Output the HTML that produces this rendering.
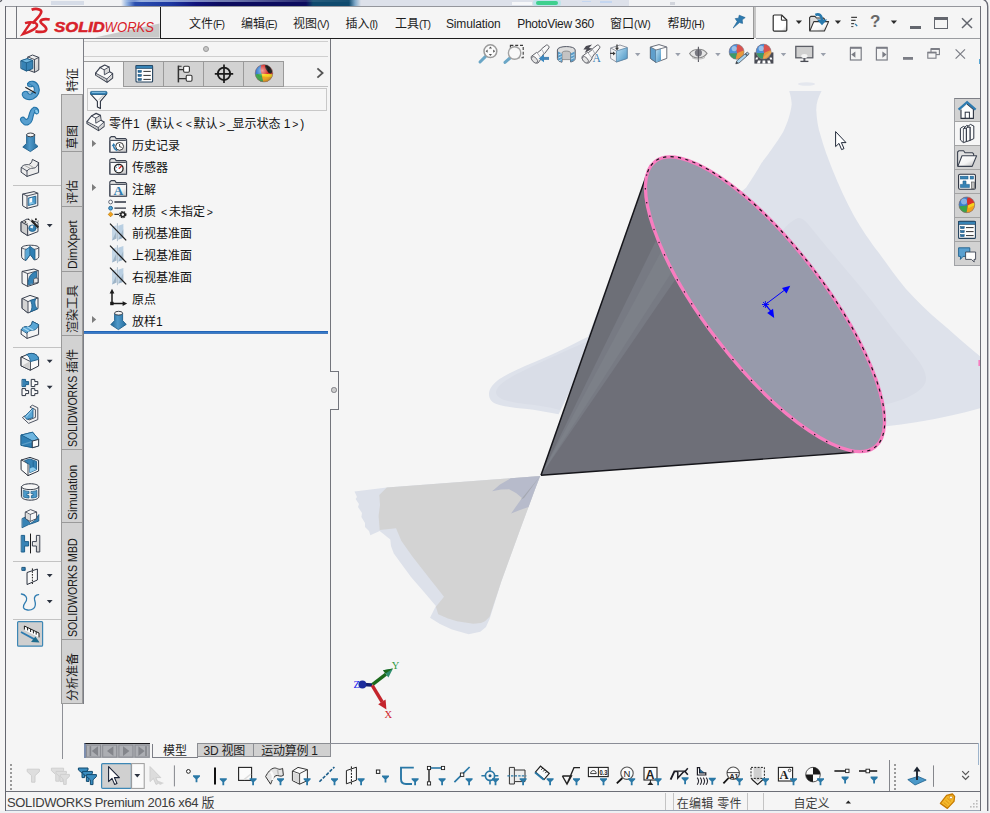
<!DOCTYPE html>
<html lang="zh-CN">
<head>
<meta charset="utf-8">
<title>SOLIDWORKS Premium 2016 x64 版</title>
<style>
html,body{margin:0;padding:0;}
body{width:990px;height:813px;position:relative;overflow:hidden;background:#f5f5f5;
  font-family:"Liberation Sans","Noto Sans CJK SC",sans-serif;font-size:12px;color:#1e1e1e;}
.abs{position:absolute;}
.ln{position:absolute;background:#74767d;}
.t{position:absolute;white-space:nowrap;line-height:16px;}
svg{position:absolute;overflow:visible;}
/* vertical tabs */
.vtab{position:absolute;left:61px;width:22px;background:#d2d2d2;border:1px solid #9a9a9a;box-sizing:border-box;}
.vtab>span,.vt{position:absolute;left:18px;bottom:2.5px;white-space:nowrap;transform-origin:0 100%;transform:rotate(-90deg);font-size:12px;line-height:14px;height:14px;color:#1a1a1a;}
.ftab{top:61px;width:41px;height:26px;background:#d2d2d2;border:1px solid #9a9a9a;box-sizing:border-box;}
.sx{display:inline-block;transform-origin:0 50%;}
.menu{position:absolute;top:15.6px;font-size:12px;line-height:16px;white-space:nowrap;color:#1e1e1e;}
.mn{font-size:10.5px;letter-spacing:-0.7px;}
.ab{display:inline-block;width:9.6px;text-align:center;font-size:10.5px;}
.tree{position:absolute;font-size:12px;line-height:16px;white-space:nowrap;color:#111;}
.btab{position:absolute;top:743.5px;height:15px;font-size:12px;line-height:15px;white-space:nowrap;}
</style>
</head>
<body>
<!-- ===== desktop strip behind the window ===== -->
<div class="abs" id="deskstrip" style="left:0;top:0;width:990px;height:6px;background:#f1f2f4;">
<div class="abs" style="left:51px;top:1px;width:33px;height:3.5px;background:#d6dce7;"></div>
<div class="abs" style="left:121px;top:0;width:240px;height:6px;background:linear-gradient(to right,rgba(241,242,244,1) 0,#8fb0e0 6px,#2b4faf 14px,#1d37a0 50px,#10127a 75px,#0c0c5e 100px,#0c0c5e 185px,#0f4a6e 192px,#0f4a6e 228px,#7fa8c8 234px,#dde1ea 240px);"></div>
<div class="abs" style="left:121px;top:0;width:240px;height:1.5px;background:linear-gradient(to right,rgba(255,255,255,0) 0,rgba(190,210,240,0.75) 20px,rgba(190,210,240,0.55) 110px,rgba(255,255,255,0.1) 190px,rgba(255,255,255,0) 240px);"></div>
<div class="abs" style="left:361px;top:0;width:268px;height:5.5px;background:#dde1ea;"></div>
<div class="abs" style="left:512px;top:1.5px;width:20px;height:3px;background:#f6f7f9;"></div>
<div class="abs" style="left:533px;top:0;width:28px;height:5.5px;background:#bfe3ea;border-radius:2px;"></div>
<div class="abs" style="left:536px;top:0.5px;width:22px;height:4.5px;background:#3ed08e;border-radius:2px;"></div>
<div class="abs" style="left:582px;top:0.5px;width:9px;height:1.5px;background:#c4d6f0;"></div>
<div class="abs" style="left:600px;top:0.5px;width:12px;height:2px;background:#c4d6f0;"></div>
<div class="abs" style="left:670px;top:2px;width:5px;height:2.5px;background:#d2d5dc;"></div>
</div>

<!-- ===== window frame ===== -->
<div class="ln" style="left:5px;top:6px;width:976px;height:1px;background:#94969c;"></div>
<div class="ln" style="left:5px;top:6px;width:1.3px;height:805px;background:#65676f;"></div>
<div class="ln" style="left:16px;top:6px;width:1px;height:32px;"></div>
<div class="ln" style="left:5px;top:38px;width:156px;height:1px;"></div>

<!-- SECTION: titlebar -->
<!-- logo -->
<svg style="left:0;top:0" width="165" height="40" viewBox="0 0 165 40">
  <polygon points="95,37.5 159.5,23.5 159.5,37.5" fill="#c9c9c9"/>
  <g fill="none" stroke="#d8222a" stroke-linecap="butt" stroke-linejoin="miter">
    <path d="M31.6,9.800 C35,8.400 40.800,8.600 41.300,11.600 C41.500,14.400 37,18.600 32.400,23.400" stroke-width="2.700"/>
    <path d="M25,23.200 C30,21.600 36.600,22 37.100,25 C37.400,28 31,31.400 22.800,34.200 L30.800,22.400" stroke-width="2.400"/>
    <path d="M49.700,19.500 C45,18.500 40.700,19.300 40.500,21.700 C40.500,23.900 46.700,26.300 46.300,29.300 C45.600,32.100 40,32.100 35.400,31.300" stroke-width="2.700"/>
  </g>
  <text x="54.3" y="31.5" font-family="Liberation Sans, sans-serif" font-size="14.6" font-weight="700" font-style="italic" fill="#d8222a" stroke="#d8222a" stroke-width="0.5" textLength="50.5" lengthAdjust="spacingAndGlyphs">SOLID</text>
  <text x="104.6" y="31.5" font-family="Liberation Sans, sans-serif" font-size="14.6" font-style="italic" fill="#d8222a" textLength="49.5" lengthAdjust="spacingAndGlyphs">WORKS</text>
</svg>
<!-- menu bar borders -->
<div class="abs" style="left:160px;top:7px;width:1px;height:32px;background:#1c1c1c;"></div>
<div class="abs" style="left:160px;top:37.5px;width:594px;height:1.5px;background:#1c1c1c;"></div>
<div class="abs" style="left:753px;top:7px;width:3px;height:31px;background:#c6c6c6;border-left:1px solid #9b9b9b;box-sizing:border-box;"></div>
<div class="ln" style="left:756px;top:38px;width:224px;height:1px;background:#9a9ca0;"></div>
<div class="menu" style="left:189px;">文件<span class="mn">(F)</span></div>
<div class="menu" style="left:241px;">编辑<span class="mn">(E)</span></div>
<div class="menu" style="left:293px;">视图<span class="mn">(V)</span></div>
<div class="menu" style="left:345.5px;">插入<span class="mn">(I)</span></div>
<div class="menu" style="left:395px;">工具<span class="mn">(T)</span></div>
<div class="menu" id="m_sim" style="letter-spacing:-0.15px;left:446px;">Simulation</div>
<div class="menu" id="m_pv" style="letter-spacing:-0.3px;left:517.300px;">PhotoView 360</div>
<div class="menu" style="left:610px;">窗口<span class="mn" style="letter-spacing:-0.1px">(W)</span></div>
<div class="menu" style="left:667.5px;">帮助<span class="mn">(H)</span></div>
<!-- pin -->
<svg style="left:730px;top:13px" width="18" height="18" viewBox="0 0 18 18">
  <path d="M9.2,2.2 L15.2,4.6 L12.2,6.8 L12.6,10.4 L9.4,9.6 L3.2,15 L7.2,8.6 L5.2,5.6 L8.6,5.2 Z" fill="#2e7bb0" stroke="#1d5f90" stroke-width="0.6"/>
</svg>
<!-- new document -->
<svg style="left:770px;top:12px" width="22" height="22" viewBox="0 0 22 22">
  <defs><linearGradient id="gnd" x1="0.4" y1="0.4" x2="1" y2="1"><stop offset="0" stop-color="#ffffff"/><stop offset="0.6" stop-color="#ffffff"/><stop offset="1" stop-color="#b9b9b9"/></linearGradient></defs>
  <path d="M4.400,3 H11.600 L16.800,8 V18 Q16.800,19.200 15.600,19.200 H4.400 Q3.200,19.200 3.200,18 V4.200 Q3.200,3 4.400,3 Z" fill="url(#gnd)" stroke="#2b2b2b" stroke-width="1.200" stroke-linejoin="round"/>
  <path d="M11.400,3.400 V8.200 H16.600" fill="none" stroke="#2b2b2b" stroke-width="1"/>
</svg>
<svg style="left:795px;top:20px" width="8" height="5" viewBox="0 0 8 5"><polygon points="0.8,0.6 7,0.6 3.9,3.9" fill="#2b2b2b"/></svg>
<!-- open -->
<svg style="left:806px;top:11px" width="26" height="24" viewBox="806 11 26 24">
  <defs><linearGradient id="gop" x1="0.300" y1="0.200" x2="1" y2="1"><stop offset="0" stop-color="#ffffff"/><stop offset="0.550" stop-color="#f4f4f4"/><stop offset="1" stop-color="#b4b4b4"/></linearGradient></defs>
  <path d="M809.600,30.800 V17.600 L810.800,16.400 H815 L816.400,18 H823.400 L824.400,19 V22" fill="#dcdcdc" stroke="#333" stroke-width="1.100" stroke-linejoin="round"/>
  <path d="M809.800,31 L813.800,21.600 H828.600 L824.400,31 Z" fill="url(#gop)" stroke="#333" stroke-width="1.100" stroke-linejoin="round"/>
  <path d="M815.400,15 C819,13.400 822,15.400 822,20" fill="none" stroke="#2779ad" stroke-width="2.600"/>
  <polygon points="816.800,19.600 827.200,19.600 822,25.200" fill="#2779ad"/>
</svg>
<svg style="left:834px;top:20px" width="8" height="5" viewBox="0 0 8 5"><polygon points="0.8,0.6 7,0.6 3.9,3.9" fill="#2b2b2b"/></svg>
<!-- options small -->
<svg style="left:849px;top:15px" width="10" height="14" viewBox="0 0 10 14">
  <path d="M2.2,2.4 H8 M2.2,5.4 H6.6 M2.2,8.6 H5.2" stroke="#444" stroke-width="1.1" fill="none"/>
  <path d="M6.2,8.8 L8.2,11.2" stroke="#2779ad" stroke-width="1.3"/>
  <path d="M2.2,11.6 H4.4" stroke="#444" stroke-width="1"/>
</svg>
<!-- help -->
<div class="t" style="left:870px;top:12px;font-size:17px;line-height:20px;font-weight:700;color:#686868;font-family:'Liberation Sans',sans-serif;">?</div>
<svg style="left:890px;top:20px" width="8" height="5" viewBox="0 0 8 5"><polygon points="0.8,0.6 7,0.6 3.9,3.9" fill="#2b2b2b"/></svg>
<!-- window buttons -->
<div class="abs" style="left:909.5px;top:25.5px;width:11px;height:3px;background:#63666e;"></div>
<div class="abs" style="left:934px;top:17px;width:14px;height:12px;border:1.3px solid #63666e;border-top-width:3px;box-sizing:border-box;"></div>
<svg style="left:960px;top:16px" width="14" height="14" viewBox="0 0 14 14"><path d="M2,2.200 L12,12 M12,2.200 L2,12" stroke="#63666e" stroke-width="1.500" fill="none"/></svg>

<!-- SECTION: lefttoolbar -->
<svg style="left:0;top:0" width="62" height="660" viewBox="0 0 62 660">
<defs>
  <linearGradient id="bl" x1="0" y1="0" x2="1" y2="1"><stop offset="0" stop-color="#8fcbea"/><stop offset="1" stop-color="#2b7db3"/></linearGradient>
  <linearGradient id="blh" x1="0" y1="0" x2="1" y2="0"><stop offset="0" stop-color="#1f6593"/><stop offset="0.45" stop-color="#4f99c9"/><stop offset="1" stop-color="#246c9d"/></linearGradient>
  <linearGradient id="wg" x1="0" y1="0" x2="1" y2="1"><stop offset="0" stop-color="#ffffff"/><stop offset="1" stop-color="#c9c9c9"/></linearGradient>
</defs>
<g stroke-linejoin="round" stroke-linecap="round">
<!-- separators -->
<g stroke="#c3c3c3" stroke-width="1" stroke-linecap="butt">
  <path d="M13,185.5 H61 M13,347.5 H61 M13,561.5 H61 M13,619.5 H61"/>
</g>
<!-- 1 extrude boss -->
<path d="M28,57 L32.5,55 L38.8,57.4 L38.8,70 L34.5,72.4 L28,70 Z" fill="url(#wg)" stroke="#3b4250" stroke-width="1"/>
<path d="M34.5,59.6 L34.5,72.2 M28,57 L34.5,59.6 L38.8,57.4" fill="none" stroke="#3b4250" stroke-width="0.9"/>
<path d="M21.2,60.8 L27.4,58.8 L32.8,60.6 L32.8,68.6 L26.4,71 L21.2,68.6 Z" fill="#3783b5" stroke="#1b5a85" stroke-width="1"/>
<path d="M21.2,60.8 L26.4,62.8 L32.8,60.6 L27.4,58.8 Z" fill="#72b8e0" stroke="#1b5a85" stroke-width="0.8"/>
<path d="M26.4,62.8 L26.4,71" stroke="#1b5a85" stroke-width="0.8"/>
<!-- 2 revolve -->
<path d="M27.5,83.5 C30,80 36,80.5 38.5,86 C40.5,91 38.5,96.5 33,99 C28,100.8 23,98.5 22.2,95 C21.8,92 25.5,90.4 27.6,92 C27.8,94.4 30.5,95 32.6,93 C35,91 35,87 32.5,86 C30.5,87.5 27,86.5 27.5,83.5 Z" fill="#589fcf" stroke="#2273a8" stroke-width="1.1"/>
<path d="M27.6,92 C29.5,91.5 31,92 32.6,93 M32.5,86 C31.5,84.5 29.5,83.6 27.5,83.5" fill="none" stroke="#2273a8" stroke-width="0.8"/>
<path d="M25.8,87.4 L35.4,93" stroke="#222" stroke-width="1.2"/>
<!-- 3 sweep -->
<path d="M20.4,119.5 C20.6,117 23.4,116.4 24.6,118 C26,120.4 28,119.4 28.6,116.6 C29.6,112 30.6,108.6 33.6,107.4 C36.6,106.8 39.2,109.4 38.6,112 C38,114.6 35.2,114.2 34.6,112.4 C33.2,113.6 33.4,117 32,120.6 C30.4,124.6 27,126 24,124.4 C22,123.2 20.6,121.4 20.4,119.5 Z" fill="#589fcf" stroke="#2273a8" stroke-width="1.1"/>
<ellipse cx="36.6" cy="111.4" rx="1.9" ry="2.5" fill="#8ccbec" stroke="#2273a8" stroke-width="0.8" transform="rotate(-20 36.6 111.4)"/>
<!-- 4 loft -->
<path d="M26.6,135 L26.6,143.4 L22.8,147 L30.4,151.6 L38,146.4 L34.6,143.4 L34.6,135 Z" fill="url(#blh)" stroke="#1d5f8c" stroke-width="0.9"/>
<ellipse cx="30.6" cy="134.9" rx="4" ry="1.9" fill="#f6f6f6" stroke="#2a2f38" stroke-width="0.9"/>
<!-- 5 boundary boss -->
<path d="M21.4,167.4 C23,164.6 26,164.4 28.4,164.6 C30.6,164.4 32,162 32.4,159.4 L38.6,162.6 L38.6,172.6 L27,176.4 L21.4,172.4 Z" fill="#ececec" stroke="#3b4250" stroke-width="1"/>
<path d="M21.4,167.4 L27,171 L27,176.4 M27,171 C28.6,168.6 31,168.2 33.4,168.2 C36,168 37.8,165.6 38.6,162.6" fill="none" stroke="#3b4250" stroke-width="0.9"/>
<path d="M25,165.6 L30.6,168.6 M28.6,164.6 L34.4,168" fill="none" stroke="#9a9a9a" stroke-width="0.8"/>
<!-- 6 extruded cut -->
<path d="M23,194 L34,191.6 L37.8,193.2 L37.8,205.6 L27,208.4 L23,206 Z" fill="#f4f4f4" stroke="#3b4250" stroke-width="1"/>
<path d="M23,194 L27,196 L37.8,193.2 M27,196 L27,208.4" fill="none" stroke="#3b4250" stroke-width="0.9"/>
<path d="M28.6,198 L35.8,196.2 L35.8,203.6 L28.6,205.4 Z" fill="#4b9acb" stroke="#1d5f8c" stroke-width="0.9"/>
<path d="M29.4,198.6 L32.2,197.8 L32.2,202.2 L29.4,203 Z" fill="#fafafa"/>
<path d="M29.4,203 L32.2,202.2 L35,203.2 L29.4,204.8 Z" fill="#8ccbec"/>
<!-- 7 hole wizard -->
<path d="M21.4,222 L27,219 L38,222.6 L38,231.6 L27.6,235.6 L21.4,231.6 Z" fill="#f2f2f2" stroke="#3b4250" stroke-width="1"/>
<path d="M21.4,222 L27.6,225.4 L27.6,235.6" fill="#d0d0d0" stroke="#3b4250" stroke-width="0.9"/>
<path d="M21.4,222 L27.6,225.4 L27.6,235.6 L21.4,231.6 Z" fill="#cfcfcf" stroke="#3b4250" stroke-width="0.9"/>
<ellipse cx="32.4" cy="228.2" rx="3.6" ry="3.3" fill="#3783b5" stroke="#1d5f8c" stroke-width="0.8"/>
<path d="M30,227.4 A2.6,2.4 0 0 1 33.4,225.8 L32.6,228.4 Z" fill="#e8f3fa"/>
<path d="M30.6,219.4 L38.2,227.6" stroke="#222" stroke-width="2.2" stroke-linecap="butt"/>
<path d="M30.2,219 L31.4,220.4" stroke="#fff" stroke-width="1.6" stroke-linecap="butt"/>
<g fill="#222"><rect x="24.6" y="221.2" width="1.6" height="1.6"/><rect x="35" y="218.4" width="1.8" height="1.8"/><rect x="28" y="218.6" width="1" height="1"/><rect x="37.6" y="220.6" width="1" height="1"/><rect x="26.6" y="223.4" width="1" height="1"/></g>
<!-- 8 revolved cut -->
<path d="M21.6,247.6 C21.6,244.4 38.8,244.4 38.8,247.6 L38.8,256.6 C38.8,258.6 36.4,259.6 34.4,260 L30.2,254.4 L26,260.4 C23.6,259.8 21.6,258.6 21.6,256.6 Z" fill="#f3f3f3" stroke="#3b4250" stroke-width="1"/>
<path d="M21.6,247.6 C21.6,250.4 38.8,250.4 38.8,247.6" fill="none" stroke="#3b4250" stroke-width="0.9"/>
<path d="M25.4,250 L30.2,246.6 L30.2,254.6 L26,260.4 L25.4,260 Z" fill="#5aa7d6" stroke="#1d5f8c" stroke-width="0.8"/>
<path d="M30.2,246.6 L35,250 L35,259.4 L34.4,260 L30.2,254.6 Z" fill="#2f7fb4" stroke="#1d5f8c" stroke-width="0.8"/>
<!-- 9 swept cut -->
<path d="M22.4,271.4 L34,269 L38.2,270.6 L38.2,283 L27.6,286.4 L22.4,283.6 Z" fill="#f4f4f4" stroke="#3b4250" stroke-width="1"/>
<path d="M22.4,271.4 L27.6,273.6 L38.2,270.6 M27.6,273.6 L27.6,286.4" fill="none" stroke="#3b4250" stroke-width="0.9"/>
<path d="M28.2,284.6 C28,277 31,272.6 36.6,271.6 L36.6,277.6 C34.6,277.8 33.4,279 33.4,283 Z" fill="#3783b5" stroke="#1d5f8c" stroke-width="0.9"/>
<path d="M33.6,283 L33.6,279.4 C34.4,278.2 37,277.6 38,278.4 L38,282 Z" fill="#e6e6e6" stroke="#3b4250" stroke-width="0.8"/>
<!-- 10 lofted cut -->
<path d="M22.4,298.4 L30,295.4 L38,298 L38,308.6 L28,313 L22.4,308.6 Z" fill="#f6f6f6" stroke="#3b4250" stroke-width="1"/>
<path d="M22.4,298.4 L28,301.6 L28,313 L22.4,308.6 Z" fill="#d4d4d4" stroke="#3b4250" stroke-width="0.9"/>
<path d="M28,301.6 L38,298" fill="none" stroke="#3b4250" stroke-width="0.9"/>
<path d="M30.4,300.4 L35.6,298.8 C34.4,302 34.6,306 37.4,309 L30.4,311.8 C32.6,308.6 32.4,303.6 30.4,300.4 Z" fill="#3783b5" stroke="#1d5f8c" stroke-width="0.9"/>
<!-- 11 boundary cut -->
<path d="M21.4,329.4 C23,326.6 26,326.4 28.4,326.6 C30.6,326.4 32,324 32.4,321.4 L38.6,324.6 L38.6,334.6 L27,338.4 L21.4,334.4 Z" fill="#f4f4f4" stroke="#3b4250" stroke-width="1"/>
<path d="M21.4,329.4 C23,326.6 26,326.4 28.4,326.6 C30.6,326.4 32,324 32.4,321.4 L38.6,324.6 C37.8,327.6 36,330 33.4,330.2 C31,330.2 28.6,330.6 27,333 Z" fill="#5aa7d6" stroke="#1d5f8c" stroke-width="0.9"/>
<path d="M23.6,328 L28.6,331 M27.4,326.8 L33,330" fill="none" stroke="#a8d8f2" stroke-width="1.2"/>
<path d="M27,333 L27,338.4" stroke="#3b4250" stroke-width="0.9"/>
<!-- 12 fillet -->
<path d="M21.4,357 L29.4,353.6 C34.4,352.6 38.6,355.6 38.6,359.4 L38.6,366 L30.4,370.2 L21.4,366 Z" fill="#fafafa" stroke="#2c3340" stroke-width="1"/>
<path d="M21.4,357 L30.4,361.6 L30.4,370.2 L21.4,366 Z" fill="#f0f0f0" stroke="#2c3340" stroke-width="0.9"/>
<path d="M22.4,365.4 L29.6,361.4 L29.6,369 Z" fill="#cfcfcf"/>
<path d="M26.8,354.6 L29.4,353.6 C34.4,352.6 38.6,355.6 38.6,359.4 L30.4,361.6 C30.2,358.6 29,356.2 26.8,354.6 Z" fill="#4b9acb" stroke="#1d5f8c" stroke-width="0.9"/>
<!-- 13 linear pattern -->
<path d="M22.4,379.4 L25.6,379.4 L25.6,381.6 L28.6,381.6 L28.6,384.6 L25.6,384.6 L25.6,386.6 L22.4,386.6 Z" fill="#3783b5" stroke="#1d5f8c" stroke-width="1"/>
<g fill="#fafafa" stroke="#2c3340" stroke-width="1">
<path d="M31.6,379.4 L34.8,379.4 L34.8,381.6 L37.8,381.6 L37.8,384.6 L34.8,384.6 L34.8,386.6 L31.6,386.6 Z"/>
<path d="M22.4,388.6 L25.6,388.6 L25.6,390.6 L28.6,390.6 L28.6,393.6 L25.6,393.6 L25.6,395.6 L22.4,395.6 Z"/>
<path d="M31.6,388.6 L34.8,388.6 L34.8,390.6 L37.8,390.6 L37.8,393.6 L34.8,393.6 L34.8,395.6 L31.6,395.6 Z"/>
</g>
<!-- 14 rib -->
<path d="M30.4,406.6 L32.4,405.2 L37.8,407.8 L37.8,419.6 L28.6,423.4 L22.4,417.6 L24.4,416 L29,420 L35.4,417.4 L35.4,409.6 L30.4,407.4 Z" fill="#f2f2f2" stroke="#3b4250" stroke-width="0.9"/>
<path d="M33,408.4 L33,417.6 L27,419.4 L24.6,417 Z" fill="#5aa7d6" stroke="#1d5f8c" stroke-width="0.9"/>
<path d="M32.2,409.8 L26.2,417.2" stroke="#9bd0ee" stroke-width="1"/>
<!-- 15 draft -->
<path d="M21.4,435 L32.6,432.2 L38.6,439.4 L38.6,446 L32.6,447.6 L21.4,445.4 Z" fill="#3783b5" stroke="#1d5f8c" stroke-width="1"/>
<path d="M21.4,435 L32.6,432.2 L38.6,439.4 L32.6,441 Z" fill="#6db5e0" stroke="#1d5f8c" stroke-width="0.8"/>
<path d="M21.4,435 L32.6,441 L32.6,447.6 L21.4,445.4 Z" fill="#2f7fb4" stroke="#1d5f8c" stroke-width="0.8"/>
<path d="M22.4,444.6 L32,441.6" stroke="#5a9cc6" stroke-width="1.4"/>
<path d="M32.6,441 L38.6,439.4 L38.6,446 L32.6,447.6 Z" fill="#fcfcfc" stroke="#2c3340" stroke-width="0.9"/>
<!-- 16 shell -->
<path d="M21.4,460 L30,457.4 L38.6,460.4 L38.6,471 L28,475.6 L21.4,470 Z" fill="#fbfbfb" stroke="#2c3340" stroke-width="1"/>
<path d="M21.4,460 L28,463.6 L28,475.6" fill="none" stroke="#2c3340" stroke-width="0.9"/>
<path d="M25,460.4 L30,459 L36.6,461.4 L36.6,469.6 L29.8,472.6 L29.8,464.6 L26.4,462.6 Z" fill="#3783b5" stroke="#1d5f8c" stroke-width="0.9"/>
<path d="M29.8,468.4 L33.2,467 L36.4,469.6 L29.8,472.4 Z" fill="#8ccbec"/>
<path d="M33.2,461.6 L33.2,467" stroke="#1d5f8c" stroke-width="0.8"/>
<!-- 17 wrap -->
<path d="M21.4,487 C21.4,482.6 38.8,482.6 38.8,487 L38.8,496.6 C38.8,501.4 21.4,501.4 21.4,496.6 Z" fill="#f6f6f6" stroke="#2c3340" stroke-width="1"/>
<path d="M21.4,487 C21.4,490.6 38.8,490.6 38.8,487" fill="none" stroke="#2c3340" stroke-width="0.9"/>
<path d="M23.6,490.4 C25,491 27,491.4 29,491.4 L29,493.6 L27,493.6 L27,495.6 L29,495.6 L29,498 C27,498 25,497.6 23.6,497 Z" fill="#4b9acb" stroke="#1d5f8c" stroke-width="0.8"/>
<path d="M31.4,491.4 C33.4,491.4 35.4,491 36.8,490.4 L36.8,497 C35.4,497.6 33.4,498 31.4,498 L31.4,495.6 L33,495.6 L33,493.6 L31.4,493.6 Z" fill="#4b9acb" stroke="#1d5f8c" stroke-width="0.8"/>
<!-- 18 intersect -->
<path d="M22.4,518.4 L27,516.4 L27,520 L30.6,523.4 L35,520.4 L38.8,514.6 L38.8,521 L33.6,523 L28.6,524.6 L22.4,527.6 Z" fill="#3783b5" stroke="#1d5f8c" stroke-width="0.9"/>
<path d="M25.6,512 L30.6,509.6 L36.6,512 L36.6,518.6 L30.2,521.4 L25.6,518.6 Z" fill="#f7f7f7" stroke="#3b4250" stroke-width="0.9"/>
<path d="M25.6,512 L30.2,514.4 L36.6,512 M30.2,514.4 L30.2,521.4" fill="none" stroke="#3b4250" stroke-width="0.8"/>
<path d="M26.2,513 L29.8,514.8 L29.8,520.6 L26.2,518.4 Z" fill="#d9d9d9"/>
<!-- 19 mirror -->
<path d="M21.6,535.4 L24.6,535.4 L24.6,541.6 L28.6,541.6 L28.6,546 L24.6,546 L24.6,552 L21.6,552 Z" fill="#3783b5" stroke="#1d5f8c" stroke-width="1"/>
<path d="M39.4,535.4 L36.4,535.4 L36.4,541.6 L32.4,541.6 L32.4,546 L36.4,546 L36.4,552 L39.4,552 Z" fill="url(#wg)" stroke="#3b4250" stroke-width="1"/>
<path d="M30.5,533.6 V553.4" stroke="#1a1a1a" stroke-width="1" stroke-linecap="butt"/>
<!-- 20 reference geometry -->
<rect x="22.2" y="567.4" width="3" height="3" fill="#2f7fb4" stroke="#134a72" stroke-width="0.9"/>
<path d="M27.4,572.4 L37.4,569 L37.4,580 L27.4,584.4 Z" fill="#f9f9f9" stroke="#2c3340" stroke-width="1"/>
<path d="M32.4,568.4 V585" stroke="#1a1a1a" stroke-width="1" stroke-dasharray="1.6 1.2" stroke-linecap="butt"/>
<!-- 21 curves -->
<path d="M21.4,594 C25.4,594.4 27.6,597.6 26.4,600.6 C25.4,603 22.8,604.6 23.4,607.4 C24.4,610.6 30.4,610.8 33.6,608.4 C36.6,606 35.4,602.6 34.6,600 C33.8,597 35.6,594.8 38.6,594.6" fill="none" stroke="#2e7bb0" stroke-width="1.3"/>
<!-- 22 instant3D (selected) -->
<rect x="17.6" y="621.6" width="25" height="24.6" rx="1" fill="#cfcfcf" stroke="#3d87b5" stroke-width="1.2"/>
<path d="M24.4,626 L39,633 L39,637.6 L24.4,630 Z" fill="#fdfdfd"/>
<path d="M24.4,629.6 L24.4,626 L39,633 L39,637.4 M27.6,627.6 L27.6,630.4 M30.6,629 L30.6,632 M33.4,630.4 L33.4,633.4 M36.2,631.8 L36.2,634.6" fill="none" stroke="#1a1a1a" stroke-width="1" stroke-linecap="butt"/>
<path d="M21,632 L34.6,639.4" stroke="#2e7bb0" stroke-width="1.8" stroke-linecap="butt"/>
<polygon points="31,642 39.6,642.6 35.4,636.6" fill="#1f6d8f"/>
<!-- dropdown arrows -->
<g fill="#2c3340" stroke="none">
<polygon points="46.8,224 52.6,224 49.7,227.2"/>
<polygon points="46.8,359.8 52.6,359.8 49.7,363"/>
<polygon points="46.8,385.8 52.6,385.8 49.7,389"/>
<polygon points="46.8,574 52.6,574 49.7,577.2"/>
<polygon points="46.8,600 52.6,600 49.7,603.2"/>
</g>
</g>
</svg>

<!-- SECTION: vtabs -->
<div class="ln" style="left:83px;top:39px;width:1.2px;height:665px;background:#7c7e85;"></div>
<div class="abs" style="left:62px;top:60px;width:21px;height:34px;"><span class="vt">特征</span></div>
<div class="vtab" style="top:94px;height:58px;"><span>草图</span></div>
<div class="vtab" style="top:151px;height:56px;"><span>评估</span></div>
<div class="vtab" style="top:206px;height:66px;"><span style="letter-spacing:-0.2px">DimXpert</span></div>
<div class="vtab" style="top:271px;height:65px;"><span>渲染工具</span></div>
<div class="vtab" style="top:335px;height:115px;"><span><span class="sx" style="transform:scaleX(0.875);margin-right:-10.6px;">SOLIDWORKS&nbsp;</span>插件</span></div>
<div class="vtab" style="top:449px;height:74px;"><span style="letter-spacing:-0.1px">Simulation</span></div>
<div class="vtab" style="top:522px;height:118px;"><span><span class="sx" style="transform:scaleX(0.886);">SOLIDWORKS MBD</span></span></div>
<div class="vtab" style="top:639px;height:65px;"><span>分析准备</span></div>

<!-- SECTION: tree -->
<div class="ln" style="left:84px;top:41px;width:244px;height:1px;background:#cfcfcf;"></div>
<div class="ln" style="left:84px;top:56px;width:244px;height:1px;background:#cfcfcf;"></div>
<div class="abs" style="left:203.400px;top:46.200px;width:4px;height:4px;border-radius:50%;background:#c6c6c6;border:1px solid #9a9a9a;"></div>
<div class="ln" style="left:330px;top:39px;width:1.3px;height:333px;background:#73757c;"></div>
<div class="ln" style="left:330px;top:409px;width:1.3px;height:335px;background:#73757c;"></div>
<div class="abs" style="left:330px;top:371px;width:9px;height:39.300px;border:1.3px solid #73757c;border-left:none;box-sizing:border-box;background:#f5f5f5;"></div>
<div class="abs" style="left:331.200px;top:387.200px;width:5.400px;height:5.400px;border-radius:50%;background:#cdcdcd;border:1px solid #7e7e84;box-sizing:border-box;"></div>
<!-- tabs -->
<div class="ln" style="left:84px;top:86px;width:244px;height:1px;background:#c2c2c2;"></div>
<div class="abs" style="left:84px;top:61px;width:40px;height:26px;border-top:1px solid #9a9a9a;box-sizing:border-box;background:#f5f5f5;"></div>
<div class="abs ftab" style="left:123px;"></div>
<div class="abs ftab" style="left:163px;"></div>
<div class="abs ftab" style="left:203px;"></div>
<div class="abs ftab" style="left:243px;"></div>
<svg style="left:84px;top:60px" width="250" height="30" viewBox="84 60 250 30">
 <defs>
  <linearGradient id="pg" x1="0" y1="0" x2="1" y2="1"><stop offset="0" stop-color="#ffffff"/><stop offset="1" stop-color="#bdbdbd"/></linearGradient>
  <radialGradient id="ballg" cx="0.4" cy="0.35" r="0.7"><stop offset="0" stop-color="#fff" stop-opacity="0.55"/><stop offset="0.5" stop-color="#fff" stop-opacity="0"/><stop offset="1" stop-color="#000" stop-opacity="0.25"/></radialGradient>
 </defs>
 <!-- part icon (tab 1) -->
 <g transform="translate(8.600,-48.400)"><g stroke-linejoin="round" stroke-linecap="round">
  <path d="M87,121.600 L91.400,116 L96.100,113.400 L100.400,115.400 L101,120.200 L104,122 L104,126.400 L98.500,130.600 L87,123.400 Z" fill="#fafafa" stroke="#3b4250" stroke-width="1.200"/>
  <path d="M87.600,122.600 L98,128 L98.200,130 L87.600,123.600 Z" fill="#c4c4c4"/>
  <path d="M98.600,127.600 L103.600,123 L103.600,126.200 L98.800,130 Z" fill="#d6d6d6"/>
  <path d="M96,118.600 L100.200,116.200 L100.600,120.400 L96.200,122.800 Z" fill="#d9d9d9"/>
  <path d="M87,121.600 L98.200,127.400 L104,122 M98.200,127.400 L98.500,130.600 M91.400,116 L95.600,118.200 L100.400,115.400 M95.600,118.200 L95.800,123.200 L101,120.200" fill="none" stroke="#3b4250" stroke-width="0.900"/>
 </g></g>
 <!-- property manager icon (tab 2) -->
 <rect x="136" y="65.6" width="16.6" height="16.4" rx="1" fill="#fdfdfd" stroke="#23415c" stroke-width="1.1"/>
 <rect x="136" y="65.6" width="16.6" height="3" fill="#3783b5" stroke="#23415c" stroke-width="0.6"/>
 <g fill="#2a6fa3" stroke="#134a72" stroke-width="0.5"><rect x="138" y="70.4" width="3.4" height="2"/><rect x="138" y="74.4" width="3.4" height="2"/><rect x="138" y="78.4" width="3.4" height="2"/></g>
 <path d="M143.4,71.4 H150.8 M143.4,75.4 H150.8 M143.4,79.4 H150.8" stroke="#333" stroke-width="1"/>
 <!-- configuration manager icon (tab 3) -->
 <path d="M178.400,65.600 V82.400" stroke="#333" stroke-width="1.500"/>
 <path d="M178.400,66.200 H181.600 M178.400,69.600 H183.600 M178.400,78.600 H186" stroke="#333" stroke-width="1.100"/>
 <rect x="183.600" y="66.200" width="5.800" height="6" rx="1.200" fill="#fff" stroke="#333" stroke-width="1.100"/>
 <rect x="186.200" y="75.200" width="5.800" height="6" rx="1.200" fill="#fff" stroke="#333" stroke-width="1.100"/>
 <!-- dimxpert manager (tab 4) -->
 <circle cx="224" cy="73.8" r="6.2" fill="none" stroke="#1a1a1a" stroke-width="1.9"/>
 <path d="M224,64.6 V83 M214.8,73.8 H233.2" stroke="#1a1a1a" stroke-width="1.7"/>
 <!-- display manager ball (tab 5) -->
 <g>
  <clipPath id="bc"><circle cx="264" cy="73.2" r="8.8"/></clipPath>
  <g clip-path="url(#bc)">
   <rect x="254" y="63" width="20" height="20" fill="#d8312b"/>
   <path d="M254,63 L262,63 C260,68 260.4,71 261.6,74 L254,76 Z" fill="#3a7fd0"/>
   <path d="M254,74.6 L262,73.4 L263.6,83 L254,83 Z" fill="#3aa44a"/>
   <path d="M261.6,74 L273,74.6 L273,83 L263.4,83 Z" fill="#f2a21c"/>
   <path d="M261.8,73.8 L272.6,74.2 L272,77 L262.4,76.6 Z" fill="#f6d21c"/>
   <ellipse cx="268.6" cy="69" rx="2.4" ry="5" fill="#1a1a1a" transform="rotate(-32 268.6 69)"/>
  </g>
  <circle cx="264" cy="73.2" r="8.8" fill="url(#ballg)" stroke="#7a7a7a" stroke-width="0.5"/>
 </g>
 <path d="M317.4,68.4 L322.6,73 L317.4,77.6" fill="none" stroke="#555" stroke-width="1.8"/>
</svg>
<!-- filter -->
<div class="abs" style="left:87px;top:87.5px;width:240px;height:23px;border:1px solid #c8c8c8;box-sizing:border-box;background:#f6f6f6;"></div>
<svg style="left:88px;top:89px" width="22" height="22" viewBox="88 89 22 22">
 <path d="M90.6,94 L106.6,94 L100.4,101.4 L100.4,108.6 L97.4,107 L97.4,101.4 Z" fill="#fafafa" stroke="#2c3340" stroke-width="1.1" stroke-linejoin="round"/>
 <path d="M98.6,100 L103.6,95" stroke="#cfcfcf" stroke-width="1.2"/>
 <rect x="90.4" y="91.4" width="16.6" height="3" rx="1.2" fill="#3783b5" stroke="#1d5f8c" stroke-width="0.8"/>
 <path d="M92,92.4 H105.4" stroke="#9bd0ee" stroke-width="0.8"/>
</svg>
<!-- tree rows -->
<svg style="left:84px;top:111px" width="246" height="225" viewBox="84 111 246 225">
 <defs>
  <linearGradient id="fold" x1="0" y1="0" x2="1" y2="1"><stop offset="0" stop-color="#ffffff"/><stop offset="0.6" stop-color="#f3f3f3"/><stop offset="1" stop-color="#bcbcbc"/></linearGradient>
  <linearGradient id="blh2" x1="0" y1="0" x2="1" y2="0"><stop offset="0" stop-color="#1f6593"/><stop offset="0.45" stop-color="#4f99c9"/><stop offset="1" stop-color="#246c9d"/></linearGradient>
  <g id="folder">
   <path d="M0.6,16.2 L0.6,2 L2,0.6 L5.6,0.6 L7,2.6 L16.4,2.6 L17.4,3.6 L17.4,16.2 Z" fill="#e4e4e4" stroke="#3b4250" stroke-width="1.1" stroke-linejoin="round"/>
   <rect x="0.9" y="4.4" width="16.4" height="11.8" rx="0.8" fill="url(#fold)" stroke="#3b4250" stroke-width="1"/>
  </g>
  <g id="plane">
   <path d="M2.4,3.6 L7,2 L7,15.4 L2.4,17.4 Z" fill="#c3d6e6"/>
   <path d="M8.6,2.6 L13.8,0.8 L13.8,14.6 L8.6,16.6 Z" fill="#b9cfe2"/>
   <path d="M2.4,17.2 L6.8,8 L6.8,15.4 Z M8.8,16.4 L13.6,6 L13.6,14.6 Z" fill="#9fb4c6"/>
   <path d="M7.8,0 V18" stroke="#aebfcc" stroke-width="1"/>
   <path d="M0.4,0.4 L16.6,17.2" stroke="#1a1a1a" stroke-width="1.3"/>
  </g>
  <polygon id="exp" points="0,0 4.2,3.5 0,7" fill="#7d7d7d"/>
 </defs>
 <!-- root icon -->
 <g stroke-linejoin="round" stroke-linecap="round">
  <path d="M87,121.600 L91.400,116 L96.100,113.400 L100.400,115.400 L101,120.200 L104,122 L104,126.400 L98.500,130.600 L87,123.400 Z" fill="#fafafa" stroke="#3b4250" stroke-width="1.200"/>
  <path d="M87.600,122.600 L98,128 L98.200,130 L87.600,123.600 Z" fill="#c4c4c4"/>
  <path d="M98.600,127.600 L103.600,123 L103.600,126.200 L98.800,130 Z" fill="#d6d6d6"/>
  <path d="M96,118.600 L100.200,116.200 L100.600,120.400 L96.200,122.800 Z" fill="#d9d9d9"/>
  <path d="M87,121.600 L98.200,127.400 L104,122 M98.200,127.400 L98.500,130.600 M91.400,116 L95.600,118.200 L100.400,115.400 M95.600,118.200 L95.800,123.200 L101,120.200" fill="none" stroke="#3b4250" stroke-width="0.900"/>
 </g>
 <use href="#exp" x="92" y="140"/>
 <use href="#exp" x="92" y="184"/>
 <use href="#exp" x="92" y="316"/>
 <!-- history -->
 <use href="#folder" x="109.2" y="136"/>
 <circle cx="119.6" cy="146.4" r="3.9" fill="#fff" stroke="#333" stroke-width="1"/>
 <path d="M119.6,144 V146.6 L121.8,147.4" fill="none" stroke="#333" stroke-width="0.9"/>
 <path d="M113.4,145 C113.6,147.6 115,149.6 117.4,150.4" fill="none" stroke="#2e7bb0" stroke-width="1.6"/>
 <polygon points="111.6,146.2 115.6,145.4 113.6,143" fill="#2e7bb0"/>
 <!-- sensors -->
 <use href="#folder" x="109.2" y="158"/>
 <circle cx="118.8" cy="168.6" r="4.3" fill="#fff" stroke="#222" stroke-width="1.3"/>
 <path d="M118.8,168.8 L121.6,166" stroke="#d8312b" stroke-width="1.4"/>
 <path d="M116,167 L117,167.6 M118.6,165.4 V166.4 M116.4,170.6 L117.2,170" stroke="#2e7bb0" stroke-width="0.9"/>
 <!-- annotations -->
 <use href="#folder" x="109.2" y="180"/>
 <text x="113.4" y="194.800" font-family="Liberation Serif, serif" font-size="13.500" font-weight="700" fill="#2e7bb0">A</text>
 <!-- material -->
 <path d="M114.4,202 H126 M114.4,208.2 H126 M114.4,214.4 H119" stroke="#2c3340" stroke-width="1.3"/>
 <circle cx="110.6" cy="202" r="1.9" fill="#fff" stroke="#555b6b" stroke-width="0.9"/>
 <circle cx="110.6" cy="208.2" r="1.9" fill="#4fa3d8" stroke="#1d5f8c" stroke-width="0.9"/>
 <path d="M110.6,212 L113,214.4 L110.6,216.8 L108.2,214.4 Z" fill="#f2a21c" stroke="#b87400" stroke-width="0.7"/>
 <circle cx="122.8" cy="214.6" r="2.6" fill="none" stroke="#222" stroke-width="2.2" stroke-dasharray="1.4 0.7"/>
 <circle cx="122.8" cy="214.6" r="2" fill="none" stroke="#222" stroke-width="1.3"/>
 <!-- planes -->
 <use href="#plane" x="109.6" y="223.2"/>
 <use href="#plane" x="109.6" y="245.2"/>
 <use href="#plane" x="109.6" y="267.2"/>
 <!-- origin -->
 <path d="M112,291 V303.6 H124" fill="none" stroke="#1a1a1a" stroke-width="1.5"/>
 <polygon points="112,288.8 114.4,293.4 109.6,293.4" fill="#1a1a1a"/>
 <polygon points="127.2,303.6 122.6,301.2 122.6,306" fill="#1a1a1a"/>
 <rect x="110.2" y="301.8" width="3.4" height="3.4" fill="#1a1a1a"/>
 <!-- loft -->
 <path d="M114.6,313.4 L114.6,320.6 L110.8,324.6 L118.4,329.6 L126.2,324.4 L122.6,320.6 L122.6,313.4 Z" fill="url(#blh2)" stroke="#1d5f8c" stroke-width="0.9" stroke-linejoin="round"/>
 <ellipse cx="118.6" cy="313.2" rx="4" ry="1.9" fill="#f6f6f6" stroke="#2a2f38" stroke-width="0.9"/>
 <!-- rollback bar -->
 <rect x="84" y="331" width="244" height="2.8" fill="#1d5cae"/>
 <rect x="84" y="331.8" width="244" height="0.9" fill="#3f88d4"/>
</svg>
<div class="tree" id="tr0" style="left:109px;top:115.5px;">零件1&nbsp; (默认<span class="ab">&lt;</span><span class="ab">&lt;</span>默认<span class="ab">&gt;</span><span style="letter-spacing:-1.3px">_</span>显示状态&nbsp;1<span class="ab">&gt;</span>)</div>
<div class="tree"None style="left:132px;top:137.5px;">历史记录</div>
<div class="tree"None style="left:132px;top:159.5px;">传感器</div>
<div class="tree"None style="left:132px;top:181.5px;">注解</div>
<div class="tree" id="tr4" style="left:132px;top:203.5px;">材质 <span class="ab">&lt;</span>未指定<span class="ab">&gt;</span></div>
<div class="tree"None style="left:132px;top:225.5px;">前视基准面</div>
<div class="tree"None style="left:132px;top:247.5px;">上视基准面</div>
<div class="tree"None style="left:132px;top:269.5px;">右视基准面</div>
<div class="tree"None style="left:132px;top:291.5px;">原点</div>
<div class="tree"None style="left:132px;top:313.5px;">放样1</div>

<!-- SECTION: viewport -->
<svg style="left:331px;top:39px" width="649" height="704" viewBox="331 39 649 704">
 <defs>
  <clipPath id="vpclip"><rect x="331" y="39" width="649" height="704"/></clipPath>
 </defs>
 <g clip-path="url(#vpclip)">
 <!-- floor reflection / shadow (light blue-gray) -->
 <ellipse cx="806.5" cy="84" rx="8.5" ry="1.8" fill="#e4e7ee"/>
 <path d="M789.2,91 L821.5,91 C818,98 816,104 816.3,110.8 C816.8,120 818,128 820.6,135.400 C824,148 828,158 832.3,169.2 C839,186 846,201 853.8,215.4 C862,230 870,241 878.4,252.3 C887,264 896,277 906,289 C917,301 928,312 938.6,320.8 C952,332 966,345 982,358 L982,407.6 C972,410.6 961,413.4 950,415.700 C939,418 928,420.4 916,422.2 C906,423.8 896,425.200 886.2,426.2 L646,182 L588,336.800 C579,341 571,345.400 562,349.700 C550,355.400 538,360.400 525,366 C516,370 507,374 499.5,379 C494,383 489,388 489,394 C489,400 493,403.400 499.5,405 C508,407 516,408 525,408.800 C536,410 548,412.400 558.6,414.300 L600,330 L720,210 L746,187.700 C752,179 757,171 761.5,163 C770,152 777,142 783,132.300 C788,122 790.600,113 791.7,104.600 C791.600,99 790.400,95 789.2,91 Z" fill="#dee2eb"/>
 <!-- inner, slightly darker layer -->
 <path d="M886,404.400 C897,401.600 906,398.600 913,394.500 C922,389.400 926.500,384 926,377.500 C925,370 921,364 916,357.600 C909,348 901,339 893,329 C884,317 875,305 865,292.500 C856,281 846,270 836.6,258.500 C826,246 816,234 808,224 C804,219 800,217 797,218.400 C790,221.400 784,228 778,236 L700,300 Z" fill="#d9dde7"/>
 <path d="M588,341 C570,349 545,360 527,369 C512,376 497,384 496,392 C496,399 508,402 525,404 C538,405.400 550,407 560,410 L600,330 Z" fill="#d9dde7"/>
 <!-- lower-left reflection -->
 <path d="M540,476 L386.800,487.600 L354.500,491.600 L357,497 L355.600,499 L359,504 L358,507 L362,513 L361.400,517 L365,523 L365,527 L369,531 L370.400,535.300 L379.700,531 L390.300,539.500 L391,546 L393.800,553.500 L400,562 L411,577 L424,592 L435.900,606 L430,617.800 L440,624 L452,629.600 L468.600,634.200 L480.300,631.800 L486,627 L489.600,619 L501.300,581.600 L520,530 Z" fill="#dde1ea"/>
 <path d="M540,476 L386.800,487.600 L379.300,495 L380,505 L378.600,516 L379.700,530 L396,528.300 L401.300,540.700 L412,556 L428,576.600 L444,596.800 L435.900,606.800 L438.200,614.300 L448,618.400 L457,621.300 L473.300,623.700 L481,623 L485,621.300 L489.600,616.700 L501.300,581.600 L520,530 Z" fill="#d3d3d3"/>
 <path d="M540.200,476 L510.700,478.300 L500,484.400 L492.100,491.300 L501,489.400 L509.100,489.200 L516,493 L522,498.100 L516,506.500 L511.100,513.500 L520,510 L528.500,507 L534,492 Z" fill="#b7bbcb"/>
 <path d="M540.200,476 L521,499.400 L524,498 Z" fill="#a4a8b2"/>
 <!-- cone body -->
 <path d="M541,475.2 L647.5,172.2 L700,200 L862.3,451.8 Z" fill="#6e6f78"/>
 <path d="M541,475.2 L647.3,175 L656,242 Z" fill="#6d6f77"/>
 <path d="M541,475.2 L655.800,241 L676,278.600 Z" fill="#777a83"/>
 <path d="M541,475.2 L662,250 L672.400,271 Z" fill="#7c8088"/>
 <path d="M541,475.2 L647.5,172.2" stroke="#15151a" stroke-width="1.5" fill="none"/>
 <path d="M541,475.2 L862.3,451.8" stroke="#15151a" stroke-width="1.4" fill="none"/>
 <!-- top face -->
 <g transform="translate(764.98 304.3) rotate(52.437)">
  <ellipse cx="0" cy="0" rx="180.4" ry="59.7" fill="#979aab"/>
  <ellipse cx="0" cy="0" rx="180.2" ry="59.5" fill="none" stroke="#f87dc0" stroke-width="3.300"/>
  <!-- dashed black silhouette on the far half, sparse on the near half -->
  <path d="M-176.300,12.600 A180.400,59.700 0 1 1 176.200,12.700" fill="none" stroke="#15151a" stroke-width="1.150" stroke-dasharray="3.200 4.300"/>
  <path d="M176.200,12.700 A180.400,59.700 0 0 1 -176.300,12.600" fill="none" stroke="#15151a" stroke-width="1.100" stroke-dasharray="1.400 12.500" stroke-dashoffset="-9"/>
 </g>
 <!-- origin -->
 <g stroke="#0000ff" fill="#0000ff">
  <path d="M765.4,304.5 L786,289" stroke-width="1" fill="none"/>
  <polygon points="790.2,285.800 782,288 786.500,293.600" stroke="none"/>
  <path d="M765.4,304.5 L771,311.400" stroke-width="1.2" fill="none"/>
  <polygon points="774.200,318 767.200,313 773,308.800" stroke="none"/>
  <path d="M762,304.500 H769 M765.400,301 V308 M763,302 L768,307 M768,302 L763,307" stroke-width="0.9" fill="none"/>
 </g>
 <rect x="978.400" y="360" width="1.600" height="6" fill="#f87dc0"/>
 <!-- triad -->
 <g>
  <path d="M372,685 L363,684.500" stroke="#14206e" stroke-width="3.400"/>
  <circle cx="362.400" cy="684.500" r="3.900" fill="#1c2c9c"/>
  <path d="M372.400,684.600 L386,674.200" stroke="#1c6a1c" stroke-width="3.400"/>
  <polygon points="393,668.600 383,670.200 388.400,677.400" fill="#2f8f6f"/>
  <polygon points="393,668.600 383,670.200 385.500,673.500" fill="#1c6a1c"/>
  <path d="M372.200,685.400 L382.200,702" stroke="#c4242c" stroke-width="3.400"/>
  <polygon points="386.400,709.400 378.200,704.200 385.600,699.600" fill="#c4242c"/>
  <text x="391.800" y="668.800" font-family="Liberation Serif, serif" font-size="10.500" fill="#2f9a3f">Y</text>
  <text x="353.400" y="687.800" font-family="Liberation Serif, serif" font-size="10.500" fill="#1a1aee">Z</text>
  <text x="384.400" y="718" font-family="Liberation Serif, serif" font-size="10.500" fill="#d0242c">X</text>
 </g>
 <!-- mouse cursor -->
 <path d="M835.600,131.600 L835.600,146.600 L839,143.400 L841.600,149.600 L844,148.600 L841.400,142.600 L846,142.600 Z" fill="#fff" stroke="#222a3a" stroke-width="1" stroke-linejoin="round"/>
 </g>
</svg>

<!-- SECTION: rightpane -->
<!-- heads-up view toolbar -->
<svg style="left:470px;top:40px" width="510" height="30" viewBox="470 40 510 30">
 <defs>
  <linearGradient id="hb" x1="0" y1="0" x2="1" y2="1"><stop offset="0" stop-color="#b9def2"/><stop offset="1" stop-color="#4a94c4"/></linearGradient>
  <linearGradient id="tel" x1="0" y1="0" x2="1" y2="1"><stop offset="0" stop-color="#ffffff"/><stop offset="0.500" stop-color="#fafafa"/><stop offset="1" stop-color="#c4c4c4"/></linearGradient>
  <g id="scope">
   <path d="M-0.400,11.100 L5,7 L5.800,7.400 L9.600,4.400 L10,3.400 L14.900,-0.400 C16.500,-0.600 17.800,1 17.400,2.400 L12.800,8.400 L12,8.600 L9.400,12.600 L9.600,13.400 L6.400,17.600 C3.500,18.500 -1,14.500 -0.400,11.100 Z" fill="url(#tel)" stroke="#5f6168" stroke-width="1"/>
   <ellipse cx="2.900" cy="14.400" rx="2.300" ry="3.800" fill="#e4e4e4" stroke="#6a6c74" stroke-width="0.900" transform="rotate(-42 2.900 14.400)"/>
   <path d="M5.400,7.200 L9.600,12.800 M10,3.800 L12.600,8.400" stroke="#9a9ca4" stroke-width="0.800" fill="none"/>
  </g>
  <g id="ball4">
   <clipPath id="b4c"><circle cx="0" cy="0" r="7.500"/></clipPath>
   <g clip-path="url(#b4c)">
    <rect x="-8" y="-8" width="16" height="16" fill="#d9534f"/>
    <path d="M-8,-8 L1,-8 C-0.500,-4 -0.500,-1 0.600,1.600 L-8,2 Z" fill="#4a8fd8"/>
    <path d="M-8,1.600 L0.600,1.400 L-1,8 L-8,8 Z" fill="#3a9a6a"/>
    <path d="M0.600,1.400 C3,0 6,-1 8,-1.600 L8,8 L-1,8 Z" fill="#e89a3c"/>
   </g>
   <circle cx="-2.400" cy="-3.200" r="2.600" fill="#fff" opacity="0.450"/>
   <circle cx="0" cy="0" r="7.500" fill="none" stroke="#77808c" stroke-width="0.500"/>
  </g>
 </defs>
 <!-- 1 zoom to fit -->
 <path d="M485.600,56.400 L480,62" stroke="#6aa6c6" stroke-width="3" stroke-linecap="round"/>
 <circle cx="490.400" cy="51.200" r="6.400" fill="#fbfbfb" stroke="#9b9b9b" stroke-width="1.500"/>
 <g fill="#555"><polygon points="490.400,46.400 492,48.400 488.800,48.400"/><polygon points="490.400,56 492,54 488.800,54"/><polygon points="485.600,51.200 487.600,49.600 487.600,52.800"/><polygon points="495.200,51.200 493.200,49.600 493.200,52.800"/></g>
 <!-- 2 zoom area -->
 <rect x="510.400" y="45.400" width="12.800" height="12.400" fill="none" stroke="#3a3a3a" stroke-width="1.100" stroke-dasharray="3 1.800"/>
 <path d="M510,58 L505,62.400" stroke="#6aa6c6" stroke-width="3" stroke-linecap="round"/>
 <circle cx="514.600" cy="53" r="6.200" fill="#f9f9f9" stroke="#a2a2a2" stroke-width="1.400"/>
 <!-- 3 previous view -->
 <use href="#scope" x="531.600" y="45.400"/>
 <path d="M549,58.400 H543" stroke="#4a86b6" stroke-width="3"/>
 <polygon points="538.800,58.400 544,54.600 544,62.200" fill="#3a88c0"/>
 <!-- 4 section view -->
 <path d="M557.400,50 C557.400,45.400 575.200,45.400 575.200,50 L575.200,58.400 C575.200,60.400 573,61.600 570.600,62 L570.600,53.600 L562,53.600 L562,62.200 C559.400,61.600 557.400,60.400 557.400,58.400 Z" fill="#ddd" stroke="#555a66" stroke-width="1"/>
 <path d="M562,53 C562,50.400 570.600,50.400 570.600,53 L570.600,59.600 L562,59.600 Z" fill="#c4c4c4" stroke="#777" stroke-width="0.700"/>
 <path d="M558,51.600 L562,53.400 L562,62 L558,60 Z" fill="#5a9cc8"/>
 <path d="M570.600,53.400 L574.600,51.600 L574.600,60 L570.600,62 Z" fill="#5a9cc8"/>
 <path d="M558.400,55 L561.600,53.600 M558.400,58 L561.600,56.600 M558.400,61 L561.600,59.600 M571,56 L574.200,54.600 M571,59 L574.200,57.600" stroke="#cfe6f4" stroke-width="0.900"/>
 <!-- 5 dynamic annotation views -->
 <use href="#scope" x="582.400" y="45.400"/>
 <polygon points="586,46 592,44.600 589,48 592.600,48.400 584.600,53 586.600,49.400 583.400,49.600" fill="#4a4a52"/>
 <text x="592.400" y="62.400" font-family="Liberation Serif, serif" font-size="11.500" fill="#3a7fb4">A</text>
 <!-- 6 view orientation -->
 <path d="M610.600,48 L620,45 L627.200,47.400 L627.200,58.400 L616.400,62 L610.600,58.400 Z" fill="#f4f4f4" stroke="#8a8f9a" stroke-width="0.900"/>
 <path d="M616.400,51 L627.200,47.600 L627.200,58.400 L616.400,62 Z" fill="url(#hb)" stroke="#5a87a8" stroke-width="0.800"/>
 <path d="M610.600,48 L616.400,51" stroke="#8a8f9a" stroke-width="0.900"/>
 <path d="M617,44.600 V48.600 M610,53.400 H614" stroke="#3a3a3a" stroke-width="1.300"/>
 <polygon points="617,50.400 615,47.800 619,47.800" fill="#3a3a3a"/><polygon points="615.600,53.400 613,51.400 613,55.400" fill="#3a3a3a"/>
 <!-- 7 display style -->
 <path d="M650.400,47 L659,44.600 L666.800,47 L666.800,58.400 L656,62.400 L650.400,58.400 Z" fill="#fdfdfd" stroke="#6a6f7a" stroke-width="1"/>
 <path d="M650.400,47 L656,50 L656,62.400 L650.400,58.400 Z" fill="#5f9fcc" stroke="#5a6a7a" stroke-width="0.800"/>
 <path d="M656,50 L661,48.600 L661,60.600 L656,62.400 Z" fill="url(#hb)"/>
 <path d="M656,50 L666.800,47" stroke="#6a6f7a" stroke-width="0.900"/>
 <!-- 8 hide/show -->
 <path d="M689.600,53.600 C693,48.400 703,47.400 707,53.400 C703,59.400 693,59.600 689.600,53.600 Z" fill="#e6e6e6" stroke="#8a8a8a" stroke-width="1.100"/>
 <circle cx="698.400" cy="52.800" r="3.600" fill="#7a7a82"/>
 <path d="M698.400,46.800 V62" stroke="#5a5a62" stroke-width="1.100"/>
 <path d="M692,57.600 C695,59.600 702,59.600 705,57.400" stroke="#aaa" stroke-width="0.800" fill="none"/>
 <!-- 9 edit appearance -->
 <use href="#ball4" x="736.600" y="51.800"/>
 <path d="M747.400,52 L749.200,54 L739,63 L735.800,63.800 L736.800,60.800 Z" fill="#a9d6f0" stroke="#5a6470" stroke-width="0.900" stroke-linejoin="round"/>
 <path d="M745.400,53.600 L747.400,55.600" stroke="#5a6470" stroke-width="1.600"/>
 <polygon points="735.800,63.800 736.600,61.400 738.200,63" fill="#333"/>
 <!-- 10 apply scene -->
 <rect x="754.400" y="52.400" width="19" height="11.200" fill="#4a4c55"/>
 <g fill="#fff"><path d="M757,63.600 L758,60.600 L760.600,60.600 L760,63.600 Z"/><path d="M762.400,63.600 L762.600,60.600 L765.200,60.600 L765.400,63.600 Z"/><path d="M767.800,63.600 L767.400,60.600 L770,60.600 L770.800,63.600 Z"/><path d="M755.400,59.600 L756,57.600 L758,57.600 L757.600,59.600 Z"/><path d="M770,59.600 L769.600,57.600 L771.600,57.600 L772.400,59.600 Z"/></g>
 <use href="#ball4" x="763.600" y="51.600"/>
 <path d="M764,58 L771,52" stroke="#e8a85a" stroke-width="2.200"/>
 <!-- 11 view settings -->
 <rect x="795.800" y="46.400" width="17" height="11.400" fill="#d0d0d0" stroke="#5c5e66" stroke-width="1.300"/>
 <ellipse cx="804.400" cy="56" rx="3.200" ry="2" fill="#f4f4f4"/>
 <path d="M804.400,58 V61" stroke="#5c5e66" stroke-width="2"/>
 <path d="M800.400,61.400 H808.400" stroke="#4a4c54" stroke-width="1.300"/>
 <!-- dropdown arrows -->
 <g fill="#9aa0ac">
  <polygon points="635,53 640.400,53 637.700,56.200"/>
  <polygon points="675.200,53 680.600,53 677.900,56.200"/>
  <polygon points="715.200,53 720.600,53 717.900,56.200"/>
  <polygon points="780.800,53 786.200,53 783.500,56.200"/>
  <polygon points="820.600,53 826,53 823.300,56.200"/>
 </g>
 <!-- doc window buttons -->
 <g fill="none" stroke="#7b7d85" stroke-width="1.200">
  <rect x="850.400" y="48" width="10.800" height="12"/>
  <rect x="876.400" y="48" width="10.800" height="12"/>
  <path d="M850,47.600 H861.600 M876,47.600 H887.600" stroke-width="1.800"/>
  <rect x="931" y="49.400" width="8.400" height="5.200" stroke-width="1.100"/>
  <path d="M930.600,48.800 H939.800" stroke-width="1.600"/>
  <rect x="927.800" y="52.800" width="8.200" height="5.400" fill="#f5f5f5" stroke-width="1.100"/>
  <path d="M927.400,52.400 H936.400" stroke-width="1.500"/>
  <path d="M955.600,49.400 L965,58.600 M965,49.400 L955.600,58.600" stroke-width="1.200"/>
 </g>
 <polygon points="851.200,54.600 855.400,51.400 855.400,57.800" fill="#7b7d85"/>
 <polygon points="886.600,54.600 882.400,51.400 882.400,57.800" fill="#7b7d85"/>
 <rect x="903" y="57" width="10" height="2.800" fill="#7b7d85"/>
</svg>
<div class="abs" style="left:978.600px;top:59px;width:1.500px;height:4.600px;background:#5aa9d6;"></div>
<svg style="left:0;top:0" width="4" height="4" viewBox="0 0 4 4"><path d="M-1,2 Q1.600,1.400 2,-1" fill="none" stroke="#5c5e66" stroke-width="1.300"/></svg>
<!-- task pane tabs -->
<div class="abs" style="left:954px;top:98px;width:27px;height:168px;background:#d2d2d2;border:1px solid #a0a2a6;border-top:1.500px solid #7d7f86;border-right:none;box-sizing:border-box;"></div>
<div class="abs" style="left:955px;top:122px;width:25px;height:23px;background:#f6f6f6;"></div>
<div class="ln" style="left:955px;top:121px;width:25px;height:1px;background:#a4a4a4;"></div>
<div class="ln" style="left:955px;top:145px;width:25px;height:1px;background:#a4a4a4;"></div>
<div class="ln" style="left:955px;top:169px;width:25px;height:1px;background:#a4a4a4;"></div>
<div class="ln" style="left:955px;top:193px;width:25px;height:1px;background:#a4a4a4;"></div>
<div class="ln" style="left:955px;top:217px;width:25px;height:1px;background:#a4a4a4;"></div>
<div class="ln" style="left:955px;top:241px;width:25px;height:1px;background:#a4a4a4;"></div>
<svg style="left:954px;top:98px" width="27" height="168" viewBox="954 98 27 168">
 <defs>
  <linearGradient id="fo" x1="0" y1="0" x2="1" y2="1"><stop offset="0" stop-color="#ffffff"/><stop offset="0.550" stop-color="#f4f4f4"/><stop offset="1" stop-color="#b4b4b4"/></linearGradient>
 </defs>
 <!-- home -->
 <path d="M961,109.400 L961,118.400 L973.400,118.400 L973.400,109.400 L967.200,104" fill="#fdfdfd" stroke="#2c3340" stroke-width="1.100" stroke-linejoin="round"/>
 <rect x="965.200" y="112.200" width="4.200" height="6" fill="#fff" stroke="#2c3340" stroke-width="1"/>
 <path d="M958.600,109.600 L967.100,102.200 L975.600,109.600" fill="none" stroke="#2e7bb0" stroke-width="2.300" stroke-linejoin="miter"/>
 <!-- design library books -->
 <g fill="#fbfbfb" stroke="#2c3340" stroke-width="1" stroke-linejoin="round">
  <path d="M960.400,128.400 L963.400,126.400 L966.400,128 L966.400,141.600 L963.400,142.600 L960.400,140 Z"/>
  <path d="M963.400,128.600 L966.800,125.400 L970.200,127 L970.200,140.400 L966.400,141.600 L966.400,128 Z"/>
  <path d="M966.800,127.400 L970.400,124.400 L973.800,126 L973.800,138.600 L970.200,140.400 L970.200,127 Z"/>
 </g>
 <path d="M963.400,129 V142.400" stroke="#2c3340" stroke-width="0.800"/>
 <!-- file explorer folder -->
 <path d="M957.600,166 L957.600,152 L958.800,150.800 L963.600,150.800 L965,152.800 L972.600,152.800 L973.600,153.800 L973.600,156" fill="#e2e2e2" stroke="#3b4250" stroke-width="1.100" stroke-linejoin="round"/>
 <path d="M957.800,166.400 L962,155.800 L976.600,155.800 L972.200,166.400 Z" fill="url(#fo)" stroke="#3b4250" stroke-width="1.100" stroke-linejoin="round"/>
 <!-- view palette -->
 <rect x="958.600" y="174.200" width="16.800" height="15" rx="1.400" fill="#fdfdfd" stroke="#2c3340" stroke-width="1.100"/>
 <rect x="960.400" y="176.200" width="7.600" height="2.800" fill="#3783b5" stroke="#1d5f8c" stroke-width="0.600"/>
 <rect x="970.200" y="176.200" width="3.200" height="2.800" fill="#3783b5" stroke="#1d5f8c" stroke-width="0.600"/>
 <path d="M963,181 H966 V184.400 H969.400 V187.600 H960.400 V184.400 H963 Z" fill="#3783b5" stroke="#1d5f8c" stroke-width="0.600"/>
 <rect x="971.400" y="182" width="3" height="6.600" fill="#bdbdbd" stroke="#555" stroke-width="0.600"/>
 <!-- appearances ball -->
 <g>
  <clipPath id="rb"><circle cx="966.800" cy="204.800" r="7.900"/></clipPath>
  <g clip-path="url(#rb)">
   <rect x="958" y="196" width="18" height="18" fill="#d8312b"/>
   <path d="M958,196 L968,196 C966.600,200 966.800,203 967.800,205.600 L958,207 Z" fill="#3a7fd0"/>
   <path d="M958,206.400 L967.800,205.400 L966.400,214 L958,214 Z" fill="#3aa44a"/>
   <path d="M967.800,205.400 C970.400,204 973,203 976,202.400 L976,214 L966.400,214 Z" fill="#f2a21c"/>
   <path d="M967.800,205.400 C970.400,204 973,203 976,202.400 L976,205 C973,206 970.400,207 968.400,208.400 Z" fill="#f6d21c"/>
  </g>
  <circle cx="964" cy="201.400" r="3" fill="#fff" opacity="0.400"/>
  <circle cx="966.800" cy="204.800" r="7.900" fill="none" stroke="#7a7a7a" stroke-width="0.600"/>
 </g>
 <!-- custom properties -->
 <rect x="958.600" y="221.400" width="16.800" height="17" rx="1" fill="#fdfdfd" stroke="#23415c" stroke-width="1.100"/>
 <rect x="958.600" y="221.400" width="16.800" height="3" fill="#3783b5" stroke="#23415c" stroke-width="0.600"/>
 <g fill="#2a6fa3" stroke="#134a72" stroke-width="0.500"><rect x="960.600" y="226.600" width="3.600" height="2"/><rect x="960.600" y="230.600" width="3.600" height="2"/><rect x="960.600" y="234.600" width="3.600" height="2"/></g>
 <path d="M966,227.600 H973.600 M966,231.600 H973.600 M966,235.600 H973.600" stroke="#333" stroke-width="1"/>
 <!-- forum -->
 <path d="M958.600,247.800 H969.800 V256.400 H963 L960.400,259.400 L960.600,256.400 H958.600 Z" fill="#5aa0d0" stroke="#1d5f8c" stroke-width="0.900" stroke-linejoin="round"/>
 <path d="M965.600,252 H975.600 V259.400 H974 L974.200,262 L971.400,259.400 H965.600 Z" fill="#fdfdfd" stroke="#3b4250" stroke-width="0.900" stroke-linejoin="round"/>
</svg>

<!-- SECTION: bottom -->
<!-- viewport bottom line & tabs -->
<div class="ln" style="left:197px;top:743px;width:782px;height:1px;background:#8a8d96;"></div>
<div class="ln" style="left:978px;top:743px;width:1.400px;height:22px;background:#9db4cc;"></div>
<div class="ln" style="left:61.500px;top:704px;width:1px;height:55px;background:#8e9096;"></div>
<!-- nav strip -->
<div class="abs" style="left:84.300px;top:743px;width:66.200px;height:14.600px;background:#acaeb3;border-top:1.600px solid #16161a;border-left:2px solid #7d8eae;box-sizing:border-box;"></div>
<svg style="left:84px;top:744px" width="68" height="14" viewBox="84 744 68 14">
 <g stroke="#8b8d93" stroke-width="1" fill="none"><rect x="86.500" y="745.100" width="14" height="12"/><rect x="102.700" y="745.100" width="14" height="12"/><rect x="118.900" y="745.100" width="14" height="12"/><rect x="135.100" y="745.100" width="14" height="12"/></g>
 <g fill="#83858b">
  <polygon points="98,746.200 98,756 91.800,751.100"/><rect x="89.600" y="746.200" width="1.600" height="9.800"/>
  <polygon points="113.400,746.200 113.400,756 107,751.100"/>
  <polygon points="123,746.200 123,756 129.400,751.100"/>
  <polygon points="138.400,746.200 138.400,756 144.600,751.100"/><rect x="145.200" y="746.200" width="1.600" height="9.800"/>
 </g>
</svg>
<div class="abs" style="left:152px;top:743.500px;width:46px;height:14.300px;border-left:1px solid #7c7e86;border-bottom:1px solid #7c7e86;box-sizing:border-box;"></div>
<div class="abs" style="left:197px;top:743px;width:57px;height:13.500px;background:#d0d0d0;border:1px solid #8c8e93;box-sizing:border-box;"></div>
<div class="abs" style="left:253px;top:743px;width:78px;height:13.500px;background:#d0d0d0;border:1px solid #8c8e93;box-sizing:border-box;"></div>
<div class="btab" id="bt1" style="left:163px;">模型</div>
<div class="btab" id="bt2" style="letter-spacing:-0.25px;left:203.500px;">3D 视图</div>
<div class="btab" id="bt3" style="letter-spacing:-0.25px;left:261.200px;">运动算例 1</div>
<!-- toolbar lines -->
<div class="ln" style="left:6px;top:791px;width:975px;height:1.2px;background:#6c6e76;"></div>
<div class="ln" style="left:6px;top:810px;width:975px;height:1px;background:#9ca6b6;"></div>
<div class="ln" style="left:889px;top:760px;width:1px;height:31px;background:#85878c;"></div>
<!-- selection filter toolbar -->
<svg style="left:6px;top:758px" width="974" height="34" viewBox="6 758 974 34">
 <defs>
  <path id="fun" d="M0,0 H7 V1.300 L4.400,3.800 V7 H2.600 V3.800 L0,1.300 Z" fill="#2a78a6"/>
  <g id="bigfun"><path d="M0.600,0.600 H12.800 V3 L8.400,7 V13.600 H5 V7 L0.600,3 Z"/></g>
 </defs>
 <!-- grippers -->
 <g fill="#9a9a9a">
  <rect x="10" y="764" width="2" height="2"/><rect x="10" y="768" width="2" height="2"/><rect x="10" y="772" width="2" height="2"/><rect x="10" y="776" width="2" height="2"/><rect x="10" y="780" width="2" height="2"/><rect x="10" y="784" width="2" height="2"/><rect x="10" y="788" width="2" height="2"/>
  <rect x="894" y="764" width="2" height="2"/><rect x="894" y="768" width="2" height="2"/><rect x="894" y="772" width="2" height="2"/><rect x="894" y="776" width="2" height="2"/><rect x="894" y="780" width="2" height="2"/><rect x="894" y="784" width="2" height="2"/><rect x="894" y="788" width="2" height="2"/>
 </g>
 <!-- disabled filters -->
 <g fill="#dedede" stroke="#cfcfcf" stroke-width="1" stroke-linejoin="round">
  <use href="#bigfun" x="26.600" y="768.600"/>
  <use href="#bigfun" x="50.800" y="767.600" transform="scale(1)"/>
  <path d="M56,771.400 H66.400 V773.400 L62.800,776.600 V781.600 H60 V776.600 L56,773.400 Z"/>
  <path d="M60.400,774.400 H69.400 V776.400 L66.200,779.400 V784.400 H63.600 V779.400 L60.400,776.400 Z"/>
 </g>
 <!-- active filter -->
 <g fill="#3a8cbf" stroke="#134a6e" stroke-width="1" stroke-linejoin="round">
  <path d="M78.400,768 H88 V770 L84.600,773 V777.600 H82 V773 L78.400,770 Z"/>
  <path d="M82.600,771.400 H92.400 V773.400 L89,776.600 V781.400 H86.400 V776.600 L82.600,773.400 Z"/>
  <path d="M86.600,774.600 H96.400 V776.600 L93,779.800 V784.600 H90.400 V779.800 L86.600,776.600 Z"/>
 </g>
 <!-- select button -->
 <rect x="101.600" y="763.600" width="29.800" height="24.800" rx="1.200" fill="#d0d0d0" stroke="#3d87b5" stroke-width="1.200"/>
 <rect x="131.600" y="763.600" width="12.600" height="24.800" fill="#fafafa" stroke="#9a9a9a" stroke-width="1"/>
 <polygon points="134.400,774 140.200,774 137.300,777.400" fill="#2c3340"/>
 <path d="M108.600,766.600 L108.600,781.600 L112,778.400 L114.600,784.400 L117,783.400 L114.400,777.600 L119.400,777.600 Z" fill="#fff" stroke="#1c2438" stroke-width="1.100" stroke-linejoin="round"/>
 <path d="M150,766.600 L150,781.600 L153.400,778.400 L156,784.400 L158.400,783.400 L155.800,777.600 L160.800,777.600 Z" fill="#dcdcdc" stroke="#cfcfcf" stroke-width="1" stroke-linejoin="round"/>
 <path d="M156,780 L164,783 L160,785 Z" fill="#d4d4d4"/>
 <path d="M174.400,765.400 V786.400" stroke="#85878c" stroke-width="1"/>
 <!-- vertex -->
 <circle cx="188.400" cy="771.400" r="1.900" fill="#fff" stroke="#222" stroke-width="1"/>
 <use href="#fun" x="193" y="775.200"/>
 <!-- edge -->
 <path d="M215,767.400 V784.600" stroke="#111" stroke-width="2"/>
 <use href="#fun" x="219.800" y="778.200"/>
 <!-- face -->
 <rect x="238.600" y="767.400" width="13" height="13" fill="#fbfbfb" stroke="#222" stroke-width="1.100"/>
 <path d="M244,779.600 L251,774" stroke="#dcdcdc" stroke-width="1.400"/>
 <use href="#fun" x="249.600" y="778.200"/>
 <!-- surface body -->
 <path d="M265.600,776.600 C267.600,772.600 270.600,768.400 274.600,768 C277.600,768 278.600,770.600 282.600,768.400 L283.400,775.400 C280,777.400 278.400,774.800 276,775.600 C273.400,776.600 272,780.600 270.600,784.200 Z" fill="#e4e4e4" stroke="#333" stroke-width="1" stroke-linejoin="round"/>
 <path d="M270.600,771.600 C272.600,773.600 273.400,776.600 272.400,780" stroke="#fafafa" stroke-width="2.200" fill="none"/>
 <path d="M277.400,769.600 L278.400,774.600" stroke="#bdbdbd" stroke-width="1.600" fill="none"/>
 <use href="#fun" x="277" y="778.200"/>
 <!-- solid body -->
 <path d="M292.400,771 L298,767.400 L307.400,769.600 L307.400,780.600 L299.600,784.200 L292.400,780.600 Z" fill="#fbfbfb" stroke="#333" stroke-width="1" stroke-linejoin="round"/>
 <path d="M292.400,771 L299.600,773.600 L307.400,769.600 M299.600,773.600 V784.200" stroke="#333" stroke-width="0.900" fill="none"/>
 <path d="M293.200,772.200 L299,774.400 V783 L293.200,780 Z" fill="#d8d8d8"/>
 <use href="#fun" x="303.600" y="778.200"/>
 <!-- axis -->
 <path d="M319.400,781.800 L334.400,767" stroke="#1d5f8c" stroke-width="1.600" stroke-dasharray="3.400 1.400"/>
 <use href="#fun" x="331" y="778.200"/>
 <!-- plane -->
 <path d="M346.400,770.600 L356.400,767.200 L356.400,780.200 L346.400,783.800 Z" fill="#fbfbfb" stroke="#222" stroke-width="1"/>
 <path d="M351.400,766.400 V785" stroke="#111" stroke-width="1" stroke-dasharray="2 1.200"/>
 <use href="#fun" x="357.600" y="778.200"/>
 <!-- sketch point -->
 <rect x="376.400" y="770" width="3.400" height="3.400" fill="#fff" stroke="#222" stroke-width="1"/>
 <use href="#fun" x="382" y="775.400"/>
 <!-- sketch segment -->
 <path d="M413.800,767.600 H401 V779 C401,782 403,784 406,784 H412" fill="none" stroke="#2a78a6" stroke-width="1.900"/>
 <use href="#fun" x="411.600" y="778.200"/>
 <!-- midpoint -->
 <path d="M429,768 V783.400" stroke="#111" stroke-width="1.300"/>
 <path d="M429,768 H443" stroke="#2a78a6" stroke-width="1.600"/>
 <g fill="#fff" stroke="#222" stroke-width="0.900"><rect x="427.400" y="766.400" width="3.200" height="3.200"/><rect x="427.400" y="781.800" width="3.200" height="3.200"/><rect x="441.400" y="766.400" width="3.200" height="3.200"/></g>
 <use href="#fun" x="438.600" y="778.200"/>
 <!-- centerline w/ point -->
 <path d="M454.400,782.200 L469.600,767" stroke="#2a78a6" stroke-width="1.700"/>
 <rect x="460.400" y="773" width="3.400" height="3.400" fill="#fff" stroke="#222" stroke-width="0.900"/>
 <use href="#fun" x="465.600" y="778.200"/>
 <!-- center mark -->
 <circle cx="490" cy="775.800" r="4.600" fill="none" stroke="#2a78a6" stroke-width="1.700"/>
 <circle cx="490" cy="775.800" r="1.500" fill="#1d5f8c"/>
 <path d="M481.400,775.800 H485 M495,775.800 H498.400 M490,767 V770.600 M490,781 V784.600" stroke="#2a78a6" stroke-width="1.600"/>
 <use href="#fun" x="492" y="778.200"/>
 <!-- centerline/hole -->
 <path d="M509.400,767.400 H514.400 V770 H525 V781.600 H514.400 V784 H509.400 Z" fill="#ededed" stroke="#333" stroke-width="1"/>
 <path d="M514.400,770 V781.600" stroke="#333" stroke-width="0.900"/>
 <path d="M507.400,775.800 H526.400" stroke="#2a78a6" stroke-width="1.200" stroke-dasharray="2.400 1.200"/>
 <use href="#fun" x="519.600" y="778.200"/>
 <!-- dimension -->
 <g transform="rotate(40 542 773)">
  <rect x="536.400" y="768.600" width="11.400" height="8" fill="#fbfbfb" stroke="#222" stroke-width="1.200"/>
  <path d="M536.400,777 H547.800" stroke="#2a78a6" stroke-width="2"/>
  <path d="M539.400,768.600 V771 M542,768.600 V771 M544.600,768.600 V771" stroke="#222" stroke-width="0.900"/>
 </g>
 <use href="#fun" x="546.600" y="778.200"/>
 <!-- surface finish -->
 <path d="M562.400,776 H571.400 L567,784 L562.400,776 M567,784 L574,767.600 H580" fill="none" stroke="#222" stroke-width="1.400" stroke-linejoin="miter"/>
 <use href="#fun" x="573" y="778.200"/>
 <!-- geometric tolerance -->
 <rect x="588.400" y="767.400" width="19.800" height="9.200" fill="#fbfbfb" stroke="#222" stroke-width="1.100"/>
 <path d="M598.400,767.400 V776.600" stroke="#222" stroke-width="1"/>
 <path d="M590.600,773.600 C590.600,769.600 596.200,769.600 596.200,773.600 Z" fill="none" stroke="#222" stroke-width="0.900"/>
 <text x="599.400" y="775.200" font-family="Liberation Sans, sans-serif" font-size="7.500" font-weight="700" fill="#222" textLength="8" lengthAdjust="spacingAndGlyphs">0.3</text>
 <use href="#fun" x="600" y="778.200"/>
 <!-- note N -->
 <path d="M622.400,778 L616.800,783.400" stroke="#111" stroke-width="1.800"/>
 <circle cx="627" cy="773.200" r="6.200" fill="#fbfbfb" stroke="#555" stroke-width="1.100"/>
 <text x="623.600" y="777" font-family="Liberation Sans, sans-serif" font-size="9.500" fill="#222">N</text>
 <use href="#fun" x="628.200" y="778.200"/>
 <!-- datum A -->
 <rect x="644" y="767.400" width="13" height="12.600" fill="#fbfbfb" stroke="#222" stroke-width="1.100"/>
 <text x="645.800" y="778.600" font-family="Liberation Sans, sans-serif" font-size="12" font-weight="700" fill="#222">A</text>
 <path d="M650.400,780 V782" stroke="#222" stroke-width="1"/><polygon points="647.400,785 653.400,785 650.400,781.400" fill="#222"/>
 <use href="#fun" x="654.600" y="778.200"/>
 <!-- weld -->
 <path d="M670.600,779.600 L674.400,771.400 H685.200" fill="none" stroke="#1c1c24" stroke-width="1.900" stroke-linejoin="miter"/>
 <path d="M687.800,768.200 L685,771.400 L687.800,774.800" fill="none" stroke="#1c1c24" stroke-width="1.500"/>
 <path d="M677.800,771.800 L677.800,778 L683.600,771.800" fill="#fbfbfb" stroke="#1c1c24" stroke-width="1.500" stroke-linejoin="miter"/>
 <use href="#fun" x="681.600" y="777.200"/>
 <!-- bead -->
 <path d="M697.400,767.600 H699.600 V772.800 H705.800 V775 H697.400 Z" fill="#fbfbfb" stroke="#1c1c24" stroke-width="1.200" stroke-linejoin="miter"/>
 <path d="M700,769.400 L704,772.600 H700 Z" fill="#2a78a6" stroke="#123a5c" stroke-width="0.600"/>
 <g fill="none" stroke="#2c2c34" stroke-width="1.100"><path d="M697.200,777.600 C698.800,779.600 698.800,782.600 697.200,784.800"/><path d="M700.200,777.600 C701.800,779.600 701.800,782.600 700.200,784.800"/><path d="M703.200,777.600 C704.800,779.600 704.800,782.600 703.200,784.800"/><path d="M706.200,777.600 C707.800,779.600 707.800,782.600 706.200,784.800"/></g>
 <use href="#fun" x="708.800" y="777.800"/>
 <!-- datum target -->
 <path d="M728.600,778 L723.400,783.400" stroke="#111" stroke-width="1.800"/>
 <circle cx="733.200" cy="773.200" r="6.200" fill="#fbfbfb" stroke="#555" stroke-width="1.100"/>
 <path d="M727,772.600 H739.400" stroke="#333" stroke-width="0.900"/>
 <text x="729.400" y="779.400" font-family="Liberation Sans, sans-serif" font-size="7" font-weight="700" fill="#222">A1</text>
 <use href="#fun" x="736" y="778.200"/>
 <!-- cosmetic thread -->
 <path d="M753.600,767.400 H761.600 V778.400 L757.600,781.400 L753.600,778.400 Z" fill="#cfcfcf"/>
 <rect x="751" y="767.400" width="13.400" height="11" fill="none" stroke="#222" stroke-width="1" stroke-dasharray="2 1.300"/>
 <path d="M751.600,779 L757.600,784.400 L763.600,779" fill="none" stroke="#222" stroke-width="1.100"/>
 <use href="#fun" x="762" y="778.200"/>
 <!-- text A -->
 <rect x="778.400" y="767.400" width="14.200" height="13.600" fill="#fbfbfb" stroke="#222" stroke-width="1.100"/>
 <text x="779.600" y="779.400" font-family="Liberation Serif, serif" font-size="12.500" font-weight="700" fill="#222">A</text>
 <circle cx="789.600" cy="770.400" r="1.300" fill="none" stroke="#222" stroke-width="0.800"/>
 <use href="#fun" x="790" y="778.200"/>
 <!-- center of mass -->
 <circle cx="813" cy="774.600" r="7.300" fill="#fbfbfb" stroke="#555" stroke-width="1"/>
 <path d="M813,774.600 V767.300 A7.300,7.300 0 0 1 820.300,774.600 Z" fill="#1a1a1a"/>
 <path d="M813,774.600 V781.900 A7.300,7.300 0 0 1 805.700,774.600 Z" fill="#1a1a1a"/>
 <use href="#fun" x="817" y="778.200"/>
 <!-- connection point -->
 <path d="M834.400,771 H846" stroke="#111" stroke-width="1.500"/>
 <rect x="845.600" y="769.200" width="3.400" height="3.400" fill="#fff" stroke="#222" stroke-width="0.900"/>
 <use href="#fun" x="841.600" y="776.600"/>
 <!-- routing point -->
 <path d="M859,771 H877.200" stroke="#111" stroke-width="1.500"/>
 <rect x="866" y="769.200" width="3.600" height="3.600" fill="#fff" stroke="#222" stroke-width="0.900"/>
 <use href="#fun" x="870.600" y="776.600"/>
 <!-- normal to -->
 <path d="M907.800,779.600 L918,776.400 L926.200,780 L915,785 Z" fill="#4a98c8" stroke="#1d5f8c" stroke-width="0.800" stroke-linejoin="round"/>
 <path d="M917,780 V770" stroke="#1c2430" stroke-width="1.900"/>
 <polygon points="917,766.600 920.600,771.400 913.400,771.400" fill="#1c2430"/>
 <path d="M933.500,765.400 V786.800" stroke="#85878c" stroke-width="1"/>
 <path d="M962.200,771.200 L965.600,774.600 L969,771.200 M962.200,776 L965.600,779.400 L969,776" fill="none" stroke="#555" stroke-width="1.200"/>
 </svg>
<!-- status bar -->
<div class="t" id="st1" style="left:7px;top:793.5px;font-size:13px;letter-spacing:-0.36px;line-height:17px;color:#3c3c3c;">SOLIDWORKS Premium 2016 x64 版</div>
<div class="ln" style="left:665px;top:793px;width:1px;height:17px;background:#c4c4c4;"></div>
<div class="ln" style="left:673px;top:793px;width:1px;height:17px;background:#c4c4c4;"></div>
<div class="ln" style="left:747px;top:793px;width:1px;height:17px;background:#c4c4c4;"></div>
<div class="ln" style="left:763px;top:793px;width:1px;height:17px;background:#c4c4c4;"></div>
<div class="t" id="st2" style="letter-spacing:0.3px;left:676.700px;top:795.5px;font-size:12px;line-height:17px;color:#3c3c3c;">在编辑 零件</div>
<div class="t" id="st3" style="left:793.500px;top:795.5px;font-size:12px;line-height:17px;color:#3c3c3c;">自定义</div>
<svg style="left:843px;top:798px" width="10" height="8" viewBox="0 0 10 8"><polygon points="2.600,5.400 8,5.400 5.300,2.400" fill="#222"/></svg>
<svg style="left:938px;top:792px" width="20" height="18" viewBox="938 792 20 18">
 <path d="M940.400,803.400 L946.600,795.400 L952.400,794 L954.600,796.400 L954,801.400 L947.400,808.400 Z" fill="#f5b82a" stroke="#c67a00" stroke-width="1.300" stroke-linejoin="round"/>
 <circle cx="951" cy="797.400" r="1.500" fill="#fff" stroke="#c67a00" stroke-width="0.700"/>
 <path d="M943.600,802.400 L947.600,806 M945.400,800.200 L949.400,803.800 M947.200,798 L951.200,801.600" stroke="#d89210" stroke-width="0.900"/>
</svg>
<svg style="left:968px;top:798px" width="12" height="12" viewBox="968 798 12 12">
 <g fill="#bdbdbd"><rect x="976" y="800" width="1.600" height="1.600"/><rect x="976" y="803" width="1.600" height="1.600"/><rect x="976" y="806" width="1.600" height="1.600"/><rect x="973" y="803" width="1.600" height="1.600"/><rect x="973" y="806" width="1.600" height="1.600"/><rect x="970" y="806" width="1.600" height="1.600"/></g>
</svg>
<!-- right frame -->
<div class="abs" style="left:981.300px;top:0;width:8.700px;height:813px;background:#f5f5f5;"></div>
<div class="ln" style="left:980px;top:6px;width:1.300px;height:805px;background:#6e7078;"></div>
<svg style="left:980px;top:0" width="10" height="813" viewBox="980 0 10 813"><path d="M983.600,-0.500 Q987.700,1.200 987.700,6.500 V813" fill="none" stroke="#6a6c76" stroke-width="1.400"/></svg>
<div class="abs" style="left:0;top:811px;width:990px;height:2px;background:#eef0f3;"></div>

</body>
</html>
